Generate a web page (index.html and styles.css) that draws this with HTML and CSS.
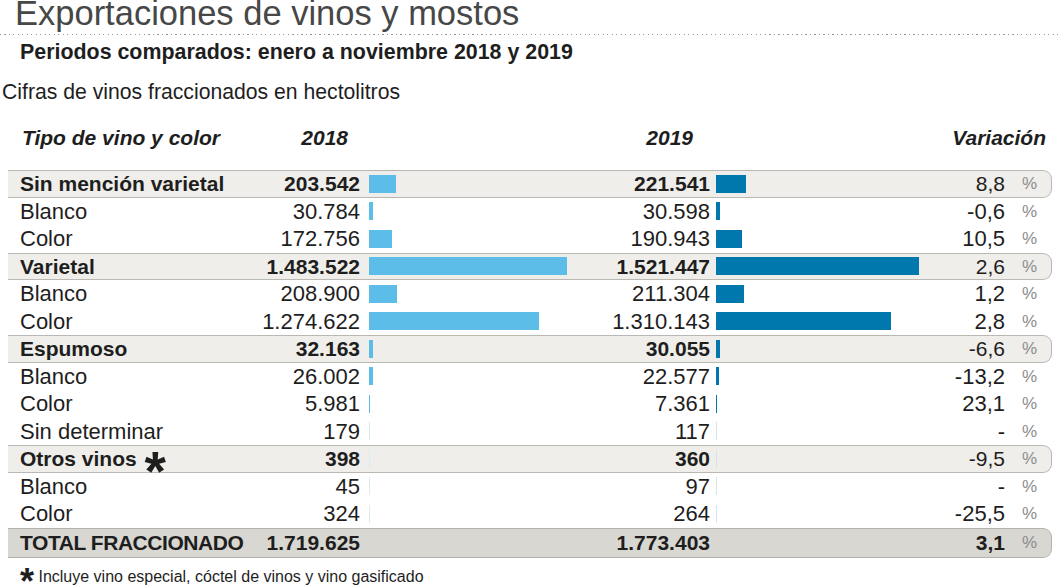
FILE: index.html
```html
<!DOCTYPE html>
<html lang="es">
<head>
<meta charset="utf-8">
<title>Exportaciones de vinos y mostos</title>
<link rel="stylesheet" href="styles.css">
</head>
<body>
<div class="page">
  <h1 class="title">Exportaciones de vinos y mostos</h1>
  <div class="dots"></div>
  <h2 class="subtitle">Periodos comparados: enero a noviembre 2018 y 2019</h2>
  <p class="unit">Cifras de vinos fraccionados en hectolitros</p>

  <div class="head">
    <div class="h-label">Tipo de vino y color</div>
    <div class="h-y18">2018</div>
    <div class="h-y19">2019</div>
    <div class="h-var">Variación</div>
  </div>

  <div class="table">
    <div class="row main">
      <div class="label">Sin mención varietal</div>
      <div class="num">203.542</div>
      <div class="track t18"><div class="bar b18" style="width:27.2px"></div></div>
      <div class="num">221.541</div>
      <div class="track t19"><div class="bar b19" style="width:29.6px"></div></div>
      <div class="var">8,8</div><div class="pct">%</div>
    </div>
    <div class="row">
      <div class="label">Blanco</div>
      <div class="num">30.784</div>
      <div class="track t18"><div class="bar b18" style="width:4.1px"></div></div>
      <div class="num">30.598</div>
      <div class="track t19"><div class="bar b19" style="width:4.1px"></div></div>
      <div class="var">-0,6</div><div class="pct">%</div>
    </div>
    <div class="row">
      <div class="label">Color</div>
      <div class="num">172.756</div>
      <div class="track t18"><div class="bar b18" style="width:23.1px"></div></div>
      <div class="num">190.943</div>
      <div class="track t19"><div class="bar b19" style="width:25.5px"></div></div>
      <div class="var">10,5</div><div class="pct">%</div>
    </div>
    <div class="row main">
      <div class="label">Varietal</div>
      <div class="num">1.483.522</div>
      <div class="track t18"><div class="bar b18" style="width:198px"></div></div>
      <div class="num">1.521.447</div>
      <div class="track t19"><div class="bar b19" style="width:203.1px"></div></div>
      <div class="var">2,6</div><div class="pct">%</div>
    </div>
    <div class="row">
      <div class="label">Blanco</div>
      <div class="num">208.900</div>
      <div class="track t18"><div class="bar b18" style="width:27.9px"></div></div>
      <div class="num">211.304</div>
      <div class="track t19"><div class="bar b19" style="width:28.2px"></div></div>
      <div class="var">1,2</div><div class="pct">%</div>
    </div>
    <div class="row">
      <div class="label">Color</div>
      <div class="num">1.274.622</div>
      <div class="track t18"><div class="bar b18" style="width:170.1px"></div></div>
      <div class="num">1.310.143</div>
      <div class="track t19"><div class="bar b19" style="width:174.9px"></div></div>
      <div class="var">2,8</div><div class="pct">%</div>
    </div>
    <div class="row main">
      <div class="label">Espumoso</div>
      <div class="num">32.163</div>
      <div class="track t18"><div class="bar b18" style="width:4.3px"></div></div>
      <div class="num">30.055</div>
      <div class="track t19"><div class="bar b19" style="width:4px"></div></div>
      <div class="var">-6,6</div><div class="pct">%</div>
    </div>
    <div class="row">
      <div class="label">Blanco</div>
      <div class="num">26.002</div>
      <div class="track t18"><div class="bar b18" style="width:3.5px"></div></div>
      <div class="num">22.577</div>
      <div class="track t19"><div class="bar b19" style="width:3px"></div></div>
      <div class="var">-13,2</div><div class="pct">%</div>
    </div>
    <div class="row">
      <div class="label">Color</div>
      <div class="num">5.981</div>
      <div class="track t18"><div class="bar b18" style="width:0.8px"></div></div>
      <div class="num">7.361</div>
      <div class="track t19"><div class="bar b19" style="width:1px"></div></div>
      <div class="var">23,1</div><div class="pct">%</div>
    </div>
    <div class="row">
      <div class="label">Sin determinar</div>
      <div class="num">179</div>
      <div class="track t18"><div class="bar b18" style="width:0.02px"></div></div>
      <div class="num">117</div>
      <div class="track t19"><div class="bar b19" style="width:0.02px"></div></div>
      <div class="var">-</div><div class="pct">%</div>
    </div>
    <div class="row main">
      <div class="label">Otros vinos <span class="star">*</span></div>
      <div class="num">398</div>
      <div class="track t18"><div class="bar b18" style="width:0.05px"></div></div>
      <div class="num">360</div>
      <div class="track t19"><div class="bar b19" style="width:0.05px"></div></div>
      <div class="var">-9,5</div><div class="pct">%</div>
    </div>
    <div class="row">
      <div class="label">Blanco</div>
      <div class="num">45</div>
      <div class="track t18"><div class="bar b18" style="width:0.01px"></div></div>
      <div class="num">97</div>
      <div class="track t19"><div class="bar b19" style="width:0.01px"></div></div>
      <div class="var">-</div><div class="pct">%</div>
    </div>
    <div class="row">
      <div class="label">Color</div>
      <div class="num">324</div>
      <div class="track t18"><div class="bar b18" style="width:0.04px"></div></div>
      <div class="num">264</div>
      <div class="track t19"><div class="bar b19" style="width:0.04px"></div></div>
      <div class="var">-25,5</div><div class="pct">%</div>
    </div>
    <div class="row main total">
      <div class="label">TOTAL FRACCIONADO</div>
      <div class="num">1.719.625</div>
      <div class="track"></div>
      <div class="num">1.773.403</div>
      <div class="track"></div>
      <div class="var">3,1</div><div class="pct">%</div>
    </div>
  </div>

  <p class="note"><span class="note-star">*</span> Incluye vino especial, cóctel de vinos y vino gasificado</p>
</div>
</body>
</html>
```

FILE: styles.css
```css
* { box-sizing: border-box; }

html, body {
  margin: 0;
  padding: 0;
  background: #ffffff;
}

body {
  font-family: "Liberation Sans", Arial, Helvetica, sans-serif;
  color: #1e1e1e;
  width: 1061px;
  height: 588px;
  overflow: hidden;
}

.page {
  display: flex;
  flex-direction: column;
}

.title {
  margin: 0;
  padding-left: 15px;
  font-size: 34.5px;
  line-height: 27px;
  height: 26px;
  font-weight: normal;
  color: #474747;
  white-space: nowrap;
}

.dots {
  margin-top: 8px;
  height: 1px;
  background-image: repeating-linear-gradient(to right, #9a9a9a 0 1px, transparent 1px 4.5px);
}

.subtitle {
  margin: 5px 0 0;
  padding-left: 20px;
  font-size: 21.4px;
  line-height: 24px;
  font-weight: bold;
  color: #1e1e1e;
  white-space: nowrap;
}

.unit {
  margin: 16px 0 0;
  padding-left: 2px;
  font-size: 21.2px;
  line-height: 24px;
  color: #1e1e1e;
  white-space: nowrap;
}

/* shared grid for header and rows */
.head,
.row {
  display: grid;
  grid-template-columns: 240px 100px 240px 110px 215px 80px 1fr;
  margin-left: 8px;
  width: 1044px;
  padding-left: 12px;
}

.head {
  margin-top: 22px;
  font-size: 21px;
  line-height: 24px;
  font-weight: bold;
  font-style: italic;
  color: #1e1e1e;
}

.h-label { padding-left: 2px; white-space: nowrap; }
.h-y18 { text-align: right; padding-right: 12px; }
.h-y19 { grid-column: 4; text-align: right; padding-right: 17px; }
.h-var { grid-column: 6 / 8; text-align: right; padding-right: 6px; }

.table {
  margin-top: 20px;
  display: flex;
  flex-direction: column;
}

.row {
  height: 27.5px;
  line-height: 27.5px;
  font-size: 22px;
  align-items: center;
}

.row.main {
  background: #efeeea;
  border-top: 1px solid #b9b8b3;
  border-bottom: 1px solid #b9b8b3;
  border-right: 1px solid #b9b8b3;
  border-radius: 0 9px 9px 0;
  font-size: 21px;
  font-weight: bold;
  line-height: 25.5px;
}

.row.total {
  background: #d8d7d2;
  border-color: #b3b2ad;
  height: 30.5px;
  line-height: 28.5px;
}

.row.total .label { letter-spacing: -0.45px; }

.label { white-space: nowrap; }

.num {
  text-align: right;
  white-space: nowrap;
}

.track {
  height: 18px;
  display: flex;
  align-items: stretch;
}

.t18 {
  margin-left: 9px;
  background: linear-gradient(to right, #dcebf3 0 1px, transparent 1px);
}

.t19 {
  margin-left: 6px;
  background: linear-gradient(to right, #d5e3ec 0 1px, transparent 1px);
}

.bar { height: 18px; }
.b18 { background: #5bbde8; }
.b19 { background: #0078ad; }

.var {
  text-align: right;
  font-weight: normal;
  white-space: nowrap;
}

.total .var { font-weight: bold; }

.pct {
  padding-left: 17px;
  font-size: 17px;
  font-weight: normal;
  color: #8c8c8c;
}

.star {
  display: inline-block;
  font-size: 55px;
  line-height: 0;
  vertical-align: -24px;
  margin-left: 2px;
}

.note {
  margin: 9px 0 0;
  padding-left: 20px;
  font-size: 16px;
  line-height: 20px;
  color: #1e1e1e;
  white-space: nowrap;
}

.note-star {
  display: inline-block;
  font-size: 36px;
  font-weight: bold;
  line-height: 0;
  vertical-align: -12px;
}
```
